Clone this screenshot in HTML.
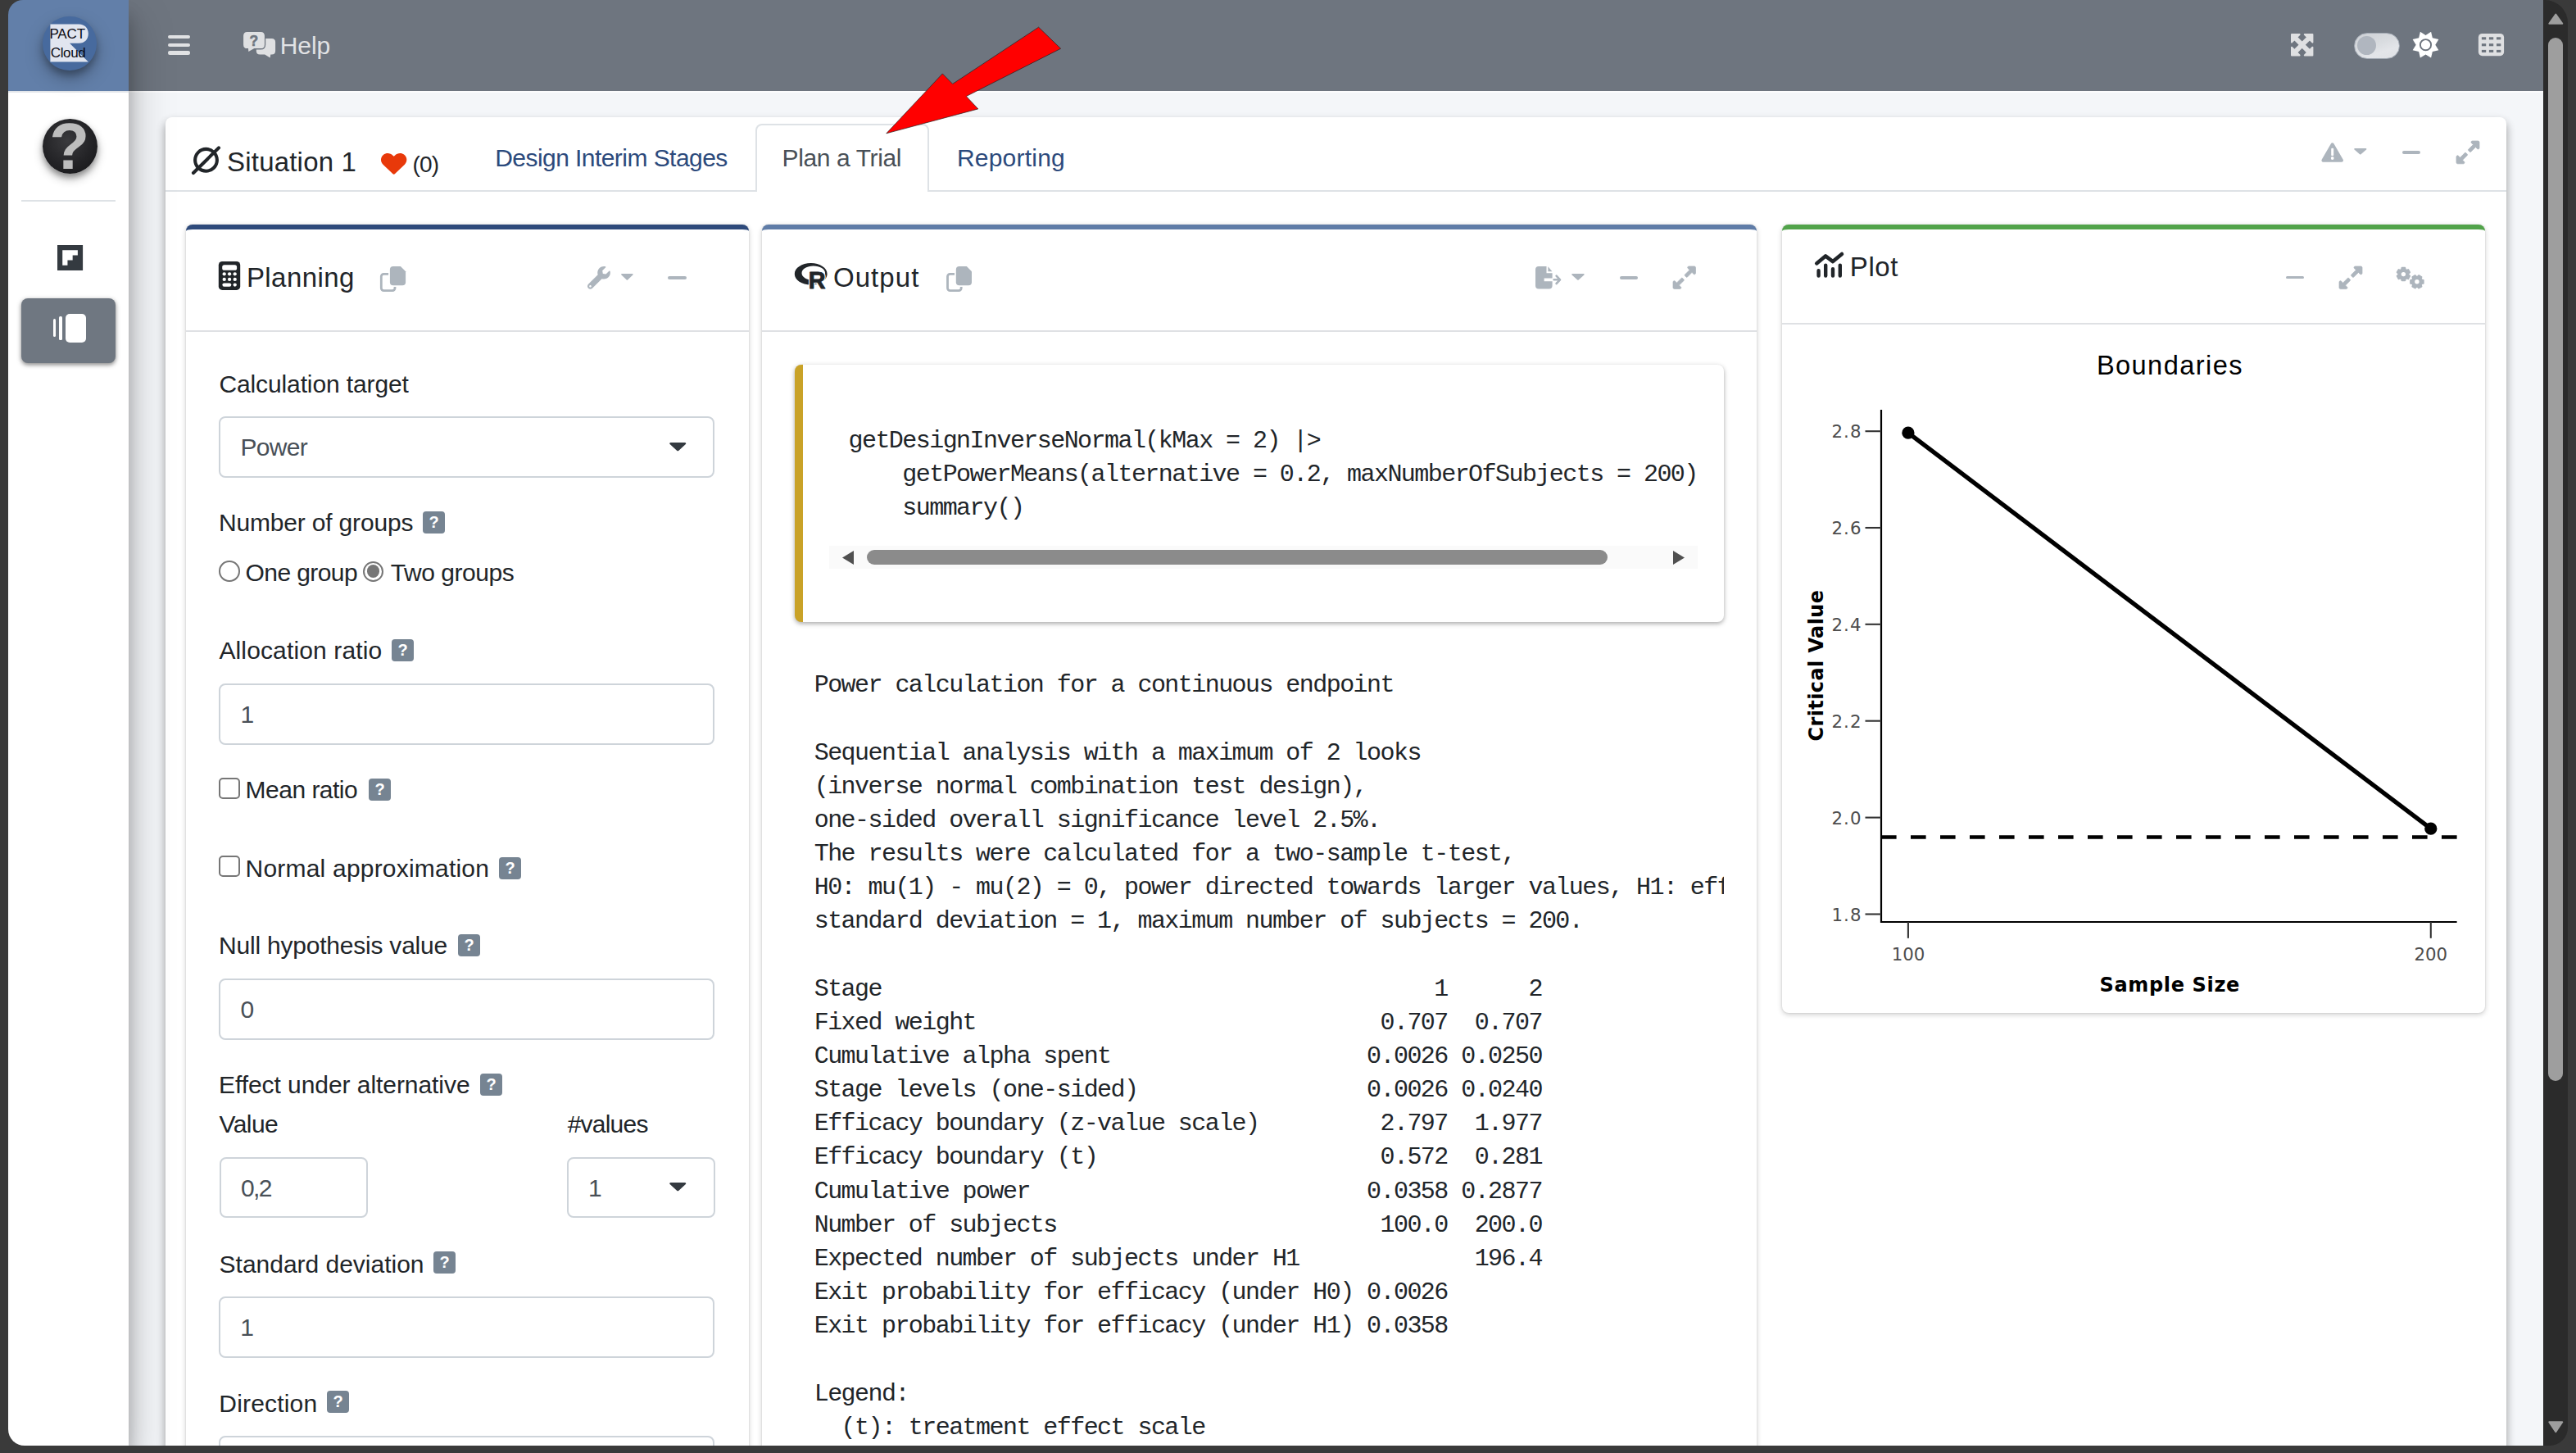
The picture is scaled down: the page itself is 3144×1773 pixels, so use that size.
<!DOCTYPE html>
<html lang="en"><head><meta charset="utf-8"><title>PACT Cloud</title><style>
*{box-sizing:border-box}
html,body{margin:0;padding:0}
body{width:3144px;height:1773px;background:#3a3a3a;overflow:hidden;position:relative;font-family:'Liberation Sans',sans-serif}
.t{position:absolute;white-space:pre;line-height:1}
.a{position:absolute}
svg{position:absolute;overflow:visible}
.card{position:absolute;background:#fff;border-radius:8px;box-shadow:0 0 2px rgba(0,0,0,.125),0 2px 6px rgba(0,0,0,.2)}
.inp{position:absolute;background:#fff;border:2px solid #ced4da;border-radius:8px;height:74.6px}
.hb{position:absolute;width:27px;height:27px;border-radius:4px;background:#768492;color:#fff;font-weight:700;font-size:20px;line-height:27px;text-align:center}
.hl{position:absolute;height:2px;background:#dfe1e4}
pre{margin:0;position:absolute;font-family:'Liberation Mono',monospace;font-size:30px;letter-spacing:-1.555px;line-height:41.15px;color:#212529;white-space:pre;overflow:hidden}
</style></head><body>
<div class="a" style="left:157px;top:0px;width:2947.00px;height:1764.00px;background:#f4f6f9"></div>
<div class="card" style="left:202px;top:143px;width:2857.00px;height:1657.00px;box-shadow:0 6px 12px rgba(0,0,0,.16),0 6px 12px rgba(0,0,0,.23)"></div>
<div class="a" style="left:202px;top:231.5px;width:2857.00px;height:2.00px;background:#dee2e6"></div>
<div class="a" style="left:921.6px;top:151px;width:212.40px;height:83.00px;background:#fff;border:2px solid #dee2e6;border-bottom:none;border-radius:8px 8px 0 0"></div>
<svg style="left:0px;top:0px;" width="3144.00" height="1773.00" viewBox="0 0 3144 1773" preserveAspectRatio="none"><circle cx="251.5" cy="195.3" r="13.4" fill="none" stroke="#212529" stroke-width="4.1"/><path d="M236 211L267 180.400" stroke="#212529" stroke-width="4.1" stroke-linecap="round"/></svg>
<span class="t" style="left:277.10px;top:180.97px;font-size:33px;color:#212529;letter-spacing:0.191px;">Situation 1</span>
<svg style="left:465px;top:186.8px;" width="31.40" height="26.80" viewBox="0 0 512 470" preserveAspectRatio="none"><path transform="translate(0,-30)" fill="#e8390a" d="M462.3 62.6C407.5 15.9 326 24.3 275.7 76.2L256 96.5l-19.7-20.3C186.1 24.3 104.5 15.9 49.7 62.6c-62.8 53.6-66.1 149.8-9.9 207.9l193.5 199.8c12.5 12.9 32.8 12.9 45.3 0l193.5-199.8c56.3-58.1 53-154.3-9.8-207.9z"/></svg>
<span class="t" style="left:503.40px;top:187.20px;font-size:28px;color:#212529;letter-spacing:-0.748px;">(0)</span>
<span class="t" style="left:604.20px;top:177.60px;font-size:30px;color:#2c4a7c;letter-spacing:-0.552px;">Design Interim Stages</span>
<span class="t" style="left:954.50px;top:177.60px;font-size:30px;color:#495057;letter-spacing:-0.368px;">Plan a Trial</span>
<span class="t" style="left:1167.90px;top:177.60px;font-size:30px;color:#2c4a7c;letter-spacing:0.226px;">Reporting</span>
<svg style="left:0px;top:0px;" width="3144.00" height="1773.00" viewBox="0 0 3144 1773" preserveAspectRatio="none"><path fill="#adb5bd" stroke="#adb5bd" stroke-width="4" stroke-linejoin="round" d="M2846.7 176.300L2835.4 195.7H2858Z"/><rect x="2845.2" y="180.8" width="3" height="9.3" rx="1.2" fill="#fff"/><circle cx="2846.7" cy="193" r="1.9" fill="#fff"/></svg>
<svg style="left:2872.8px;top:181px;" width="15.60" height="7.60" viewBox="8 192 304 169" preserveAspectRatio="none"><path fill="#adb5bd" d="M31.3 192h257.3c17.8 0 26.7 21.5 14.1 34.1L174.1 354.8c-7.8 7.8-20.5 7.8-28.3 0L17.2 226.1C4.6 213.5 13.5 192 31.3 192z"/></svg>
<div class="a" style="left:2932px;top:183.79999999999998px;width:22.20px;height:3.80px;background:#adb5bd;border-radius:2px"></div>
<svg style="left:2997.7px;top:171.7px;" width="28.00" height="27.80" viewBox="0 32 448 448" preserveAspectRatio="none"><path fill="#adb5bd" stroke="#adb5bd" stroke-width="12" stroke-linejoin="miter" d="M212.686 315.314L120 408l32.922 31.029c15.12 15.12 4.412 40.971-16.97 40.971h-112C10.697 480 0 469.255 0 456V344c0-21.382 25.803-32.09 40.922-16.971L72 360l92.686-92.686c6.248-6.248 16.379-6.248 22.627 0l25.373 25.373c6.249 6.248 6.249 16.378 0 22.627zm22.628-118.628L328 104l-32.922-31.029C279.958 57.851 290.666 32 312.048 32h112C437.303 32 448 42.745 448 56v112c0 21.382-25.803 32.09-40.922 16.971L376 152l-92.686 92.686c-6.248 6.248-16.379 6.248-22.627 0l-25.373-25.373c-6.249-6.248-6.249-16.378 0-22.627z"/></svg>
<div class="card" style="left:227px;top:274px;width:686.50px;height:1526.00px;border-top:6px solid #2e4a7b"></div>
<div class="hl" style="left:227px;top:402.8px;width:686.50px;height:2.00px;"></div>
<span class="t" style="left:300.90px;top:321.87px;font-size:33px;color:#212529;letter-spacing:0.431px;">Planning</span>
<svg style="left:757.8px;top:334px;" width="14.80" height="7.70" viewBox="8 192 304 169" preserveAspectRatio="none"><path fill="#adb5bd" d="M31.3 192h257.3c17.8 0 26.7 21.5 14.1 34.1L174.1 354.8c-7.8 7.8-20.5 7.8-28.3 0L17.2 226.1C4.6 213.5 13.5 192 31.3 192z"/></svg>
<div class="a" style="left:815.2px;top:337.0px;width:23.30px;height:3.80px;background:#adb5bd;border-radius:2px"></div>
<div class="card" style="left:930px;top:274px;width:1214.30px;height:1526.00px;border-top:6px solid #5f7ca7"></div>
<div class="hl" style="left:930px;top:402.8px;width:1214.30px;height:2.00px;"></div>
<span class="t" style="left:1016.90px;top:321.87px;font-size:33px;color:#212529;letter-spacing:1.081px;">Output</span>
<svg style="left:1918px;top:334px;" width="15.90" height="7.80" viewBox="8 192 304 169" preserveAspectRatio="none"><path fill="#adb5bd" d="M31.3 192h257.3c17.8 0 26.7 21.5 14.1 34.1L174.1 354.8c-7.8 7.8-20.5 7.8-28.3 0L17.2 226.1C4.6 213.5 13.5 192 31.3 192z"/></svg>
<div class="a" style="left:1977px;top:336.90000000000003px;width:22.20px;height:3.80px;background:#adb5bd;border-radius:2px"></div>
<svg style="left:2041.9px;top:324.9px;" width="27.50" height="27.50" viewBox="0 32 448 448" preserveAspectRatio="none"><path fill="#adb5bd" stroke="#adb5bd" stroke-width="12" stroke-linejoin="miter" d="M212.686 315.314L120 408l32.922 31.029c15.12 15.12 4.412 40.971-16.97 40.971h-112C10.697 480 0 469.255 0 456V344c0-21.382 25.803-32.09 40.922-16.971L72 360l92.686-92.686c6.248-6.248 16.379-6.248 22.627 0l25.373 25.373c6.249 6.248 6.249 16.378 0 22.627zm22.628-118.628L328 104l-32.922-31.029C279.958 57.851 290.666 32 312.048 32h112C437.303 32 448 42.745 448 56v112c0 21.382-25.803 32.09-40.922 16.971L376 152l-92.686 92.686c-6.248 6.248-16.379 6.248-22.627 0l-25.373-25.373c-6.249-6.248-6.249-16.378 0-22.627z"/></svg>
<div class="card" style="left:2174.7px;top:274px;width:858.80px;height:961.50px;border-top:6px solid #51a34a"></div>
<div class="hl" style="left:2174.7px;top:393.6px;width:858.80px;height:2.00px;"></div>
<span class="t" style="left:2257.80px;top:308.77px;font-size:33px;color:#212529;letter-spacing:0.602px;">Plot</span>
<div class="a" style="left:2790px;top:336.70000000000005px;width:22.00px;height:3.80px;background:#adb5bd;border-radius:2px"></div>
<svg style="left:2854.6px;top:325px;" width="28.00" height="27.60" viewBox="0 32 448 448" preserveAspectRatio="none"><path fill="#adb5bd" stroke="#adb5bd" stroke-width="12" stroke-linejoin="miter" d="M212.686 315.314L120 408l32.922 31.029c15.12 15.12 4.412 40.971-16.97 40.971h-112C10.697 480 0 469.255 0 456V344c0-21.382 25.803-32.09 40.922-16.971L72 360l92.686-92.686c6.248-6.248 16.379-6.248 22.627 0l25.373 25.373c6.249 6.248 6.249 16.378 0 22.627zm22.628-118.628L328 104l-32.922-31.029C279.958 57.851 290.666 32 312.048 32h112C437.303 32 448 42.745 448 56v112c0 21.382-25.803 32.09-40.922 16.971L376 152l-92.686 92.686c-6.248 6.248-16.379 6.248-22.627 0l-25.373-25.373c-6.249-6.248-6.249-16.378 0-22.627z"/></svg>
<span class="t" style="left:267.40px;top:453.61px;font-size:30px;color:#212529;letter-spacing:-0.114px;">Calculation target</span>
<div class="inp" style="left:267.2px;top:508.4px;width:605.3px"></div>
<span class="t" style="left:293.50px;top:531.30px;font-size:30px;color:#495057;letter-spacing:-0.686px;">Power</span>
<svg style="left:816.5px;top:539.9px;" width="20.50" height="10.30" viewBox="8 192 304 169" preserveAspectRatio="none"><path fill="#343a40" d="M31.3 192h257.3c17.8 0 26.7 21.5 14.1 34.1L174.1 354.8c-7.8 7.8-20.5 7.8-28.3 0L17.2 226.1C4.6 213.5 13.5 192 31.3 192z"/></svg>
<span class="t" style="left:267.10px;top:622.81px;font-size:30px;color:#212529;letter-spacing:-0.188px;">Number of groups</span>
<div class="hb" style="left:516.2px;top:624.2px">?</div>
<div class="a" style="left:267.2px;top:684.4px;width:25.50px;height:25.40px;border:2px solid #767676;border-radius:50%;background:#fff"></div>
<span class="t" style="left:299.60px;top:683.90px;font-size:30px;color:#212529;letter-spacing:-0.598px;">One group</span>
<div class="a" style="left:442.8px;top:684.6px;width:25.20px;height:25.20px;border:2px solid #767676;border-radius:50%;background:#fff"><div class="a" style="left:2.8px;top:2.8px;width:15.6px;height:15.6px;border-radius:50%;background:#767676"></div></div>
<span class="t" style="left:476.80px;top:683.90px;font-size:30px;color:#212529;letter-spacing:-0.454px;">Two groups</span>
<span class="t" style="left:267.40px;top:779.40px;font-size:30px;color:#212529;letter-spacing:0.141px;">Allocation ratio</span>
<div class="hb" style="left:478.2px;top:780.2px">?</div>
<div class="inp" style="left:267.2px;top:834.1px;width:605.3px"></div>
<span class="t" style="left:293.50px;top:857.00px;font-size:30px;color:#495057;">1</span>
<div class="a" style="left:267px;top:949.2px;width:25.70px;height:25.60px;border:2px solid #767676;border-radius:5px;background:#fff"></div>
<span class="t" style="left:299.60px;top:949.21px;font-size:30px;color:#212529;letter-spacing:-0.517px;">Mean ratio</span>
<div class="hb" style="left:450px;top:950.2px">?</div>
<div class="a" style="left:267px;top:1044.2px;width:25.70px;height:25.60px;border:2px solid #767676;border-radius:5px;background:#fff"></div>
<span class="t" style="left:299.60px;top:1044.70px;font-size:30px;color:#212529;letter-spacing:0.202px;">Normal approximation</span>
<div class="hb" style="left:609px;top:1045.6px">?</div>
<span class="t" style="left:267.10px;top:1139.40px;font-size:30px;color:#212529;letter-spacing:-0.220px;">Null hypothesis value</span>
<div class="hb" style="left:559px;top:1140.2px">?</div>
<div class="inp" style="left:267.2px;top:1194.1px;width:605.3px"></div>
<span class="t" style="left:293.60px;top:1217.00px;font-size:30px;color:#495057;">0</span>
<span class="t" style="left:267.00px;top:1308.61px;font-size:30px;color:#212529;letter-spacing:-0.060px;">Effect under alternative</span>
<div class="hb" style="left:586.2px;top:1310.2px">?</div>
<span class="t" style="left:267.50px;top:1356.90px;font-size:30px;color:#212529;letter-spacing:-0.579px;">Value</span>
<span class="t" style="left:692.70px;top:1356.90px;font-size:30px;color:#212529;letter-spacing:-0.784px;">#values</span>
<div class="inp" style="left:267.6px;top:1411.6px;width:181.0px"></div>
<span class="t" style="left:293.90px;top:1434.50px;font-size:30px;color:#495057;letter-spacing:-1.610px;">0,2</span>
<div class="inp" style="left:692px;top:1411.6px;width:181px"></div>
<span class="t" style="left:717.90px;top:1434.50px;font-size:30px;color:#495057;">1</span>
<svg style="left:817px;top:1443.1px;" width="20.50" height="10.30" viewBox="8 192 304 169" preserveAspectRatio="none"><path fill="#343a40" d="M31.3 192h257.3c17.8 0 26.7 21.5 14.1 34.1L174.1 354.8c-7.8 7.8-20.5 7.8-28.3 0L17.2 226.1C4.6 213.5 13.5 192 31.3 192z"/></svg>
<span class="t" style="left:267.60px;top:1527.51px;font-size:30px;color:#212529;letter-spacing:-0.017px;">Standard deviation</span>
<div class="hb" style="left:529.1px;top:1527.3px">?</div>
<div class="inp" style="left:267.2px;top:1582.2px;width:605.3px"></div>
<span class="t" style="left:293.30px;top:1605.11px;font-size:30px;color:#495057;">1</span>
<span class="t" style="left:267.30px;top:1697.61px;font-size:30px;color:#212529;letter-spacing:0.176px;">Direction</span>
<div class="hb" style="left:399.2px;top:1697.4px">?</div>
<div class="inp" style="left:267.2px;top:1752.3px;width:605.3px"></div>
<div class="a" style="left:970px;top:444.8px;width:1134.40px;height:314.00px;background:#fff;border-radius:8px;border-left:10px solid #c9a227;box-shadow:0 2px 6px rgba(0,0,0,.24),0 2px 4px rgba(0,0,0,.12)"></div>
<pre style="left:1035.5px;top:517.83px;width:1040px">getDesignInverseNormal(kMax = 2) |>
    getPowerMeans(alternative = 0.2, maxNumberOfSubjects = 200)
    summary()</pre>
<div class="a" style="left:1012.4px;top:665.8px;width:1059.60px;height:28.00px;background:#fafafa"></div>
<div class="a" style="left:1058.2px;top:671px;width:904.20px;height:18.00px;background:#8b8b8b;border-radius:9px"></div>
<svg style="left:1027.8px;top:671.5px;" width="14.00" height="17.00" viewBox="0 0 14 17" preserveAspectRatio="none"><path fill="#505050" d="M0 8.5L14 0V17Z"/></svg>
<svg style="left:2042px;top:671.5px;" width="14.00" height="17.00" viewBox="0 0 14 17" preserveAspectRatio="none"><path fill="#505050" d="M14 8.5L0 0V17Z"/></svg>
<pre style="left:993.7px;top:816.23px;width:1110.7px">Power calculation for a continuous endpoint

Sequential analysis with a maximum of 2 looks
(inverse normal combination test design),
one-sided overall significance level 2.5%.
The results were calculated for a two-sample t-test,
H0: mu(1) - mu(2) = 0, power directed towards larger values, H1: effect = 0.2,
standard deviation = 1, maximum number of subjects = 200.

Stage                                         1      2
Fixed weight                              0.707  0.707
Cumulative alpha spent                   0.0026 0.0250
Stage levels (one-sided)                 0.0026 0.0240
Efficacy boundary (z-value scale)         2.797  1.977
Efficacy boundary (t)                     0.572  0.281
Cumulative power                         0.0358 0.2877
Number of subjects                        100.0  200.0
Expected number of subjects under H1             196.4
Exit probability for efficacy (under H0) 0.0026
Exit probability for efficacy (under H1) 0.0358

Legend:
  (t): treatment effect scale</pre>
<svg style="left:0px;top:0px;" width="3144.00" height="1773.00" viewBox="0 0 3144 1773" preserveAspectRatio="none"><g fill="none" stroke="#000"><path d="M2296 500V1125H2998.6" stroke-width="2.2"/><path d="M2276.5 526.2H2296" stroke="#333" stroke-width="2.1"/><path d="M2276.5 644H2296" stroke="#333" stroke-width="2.1"/><path d="M2276.5 761.8H2296" stroke="#333" stroke-width="2.1"/><path d="M2276.5 879.7H2296" stroke="#333" stroke-width="2.1"/><path d="M2276.5 997.6H2296" stroke="#333" stroke-width="2.1"/><path d="M2276.5 1115.5H2296" stroke="#333" stroke-width="2.1"/><path d="M2328.9 1125V1144.8" stroke="#333" stroke-width="2.1"/><path d="M2966.8 1125V1144.8" stroke="#333" stroke-width="2.1"/><path d="M2296 1021.5H2998.6" stroke-width="4.5" stroke-dasharray="18.6 17.4" stroke-dashoffset="0"/><path d="M2328.9 528.2L2966.8 1011.2" stroke-width="5.4"/></g><circle cx="2328.9" cy="528.2" r="7.6"/><circle cx="2966.8" cy="1011.2" r="7.6"/></svg>
<span class="t" style="left:2235.50px;top:516.28px;font-size:21.3px;color:#4d4d4d;font-family:'DejaVu Sans',sans-serif;letter-spacing:1.065px;">2.8</span>
<span class="t" style="left:2235.50px;top:634.08px;font-size:21.3px;color:#4d4d4d;font-family:'DejaVu Sans',sans-serif;letter-spacing:1.065px;">2.6</span>
<span class="t" style="left:2235.50px;top:751.88px;font-size:21.3px;color:#4d4d4d;font-family:'DejaVu Sans',sans-serif;letter-spacing:1.065px;">2.4</span>
<span class="t" style="left:2235.50px;top:869.78px;font-size:21.3px;color:#4d4d4d;font-family:'DejaVu Sans',sans-serif;letter-spacing:1.065px;">2.2</span>
<span class="t" style="left:2235.50px;top:987.68px;font-size:21.3px;color:#4d4d4d;font-family:'DejaVu Sans',sans-serif;letter-spacing:1.065px;">2.0</span>
<span class="t" style="left:2235.50px;top:1105.58px;font-size:21.3px;color:#4d4d4d;font-family:'DejaVu Sans',sans-serif;letter-spacing:1.065px;">1.8</span>
<span class="t" style="left:2308.68px;top:1153.98px;font-size:21.3px;color:#4d4d4d;font-family:'DejaVu Sans',sans-serif;">100</span>
<span class="t" style="left:2946.48px;top:1153.98px;font-size:21.3px;color:#4d4d4d;font-family:'DejaVu Sans',sans-serif;">200</span>
<span class="t" style="left:2562.60px;top:1189.70px;font-size:24px;color:#000;font-family:'DejaVu Sans',sans-serif;font-weight:700;letter-spacing:0.639px;">Sample Size</span>
<span class="t" style="left:2558.90px;top:430.30px;font-size:32.6px;color:#000;letter-spacing:1.419px;">Boundaries</span>
<span class="t" id="ylab" style="left:2216.5px;top:811.6px;font-family:'DejaVu Sans',sans-serif;font-weight:700;font-size:24px;color:#000;transform:translate(-50%,-50%) rotate(-90deg);letter-spacing:0.4px">Critical Value</span>
<div class="a" style="left:157px;top:0px;width:2947.00px;height:111.00px;background:#6e757f"></div>
<div class="a" style="left:157px;top:111px;width:2947.00px;height:2.40px;background:#fcfcfd"></div>
<div class="a" style="left:205px;top:42.7px;width:27.30px;height:4.40px;background:#e1e2e4;border-radius:2.2px"></div>
<div class="a" style="left:205px;top:52.5px;width:27.30px;height:4.40px;background:#e1e2e4;border-radius:2.2px"></div>
<div class="a" style="left:205px;top:62.3px;width:27.30px;height:4.40px;background:#e1e2e4;border-radius:2.2px"></div>
<span class="t" style="left:341.80px;top:40.51px;font-size:30px;color:#e1e2e4;letter-spacing:-0.105px;">Help</span>
<svg style="left:0px;top:0px;" width="3144.00" height="1773.00" viewBox="0 0 3144 1773" preserveAspectRatio="none"><rect x="266.8" y="319" width="26.4" height="34.9" rx="4.4" fill="#212529"/><rect x="271.2" y="323.2" width="17.9" height="6.6" rx="2.6" fill="#fff"/><circle cx="273.7" cy="334.3" r="2.15" fill="#fff"/><circle cx="280.1" cy="334.3" r="2.15" fill="#fff"/><circle cx="286.7" cy="334.3" r="2.15" fill="#fff"/><circle cx="273.7" cy="340.9" r="2.15" fill="#fff"/><circle cx="280.1" cy="340.9" r="2.15" fill="#fff"/><circle cx="286.7" cy="340.9" r="2.15" fill="#fff"/><rect x="271.4" y="345.4" width="10.9" height="4.4" rx="2.2" fill="#fff"/><circle cx="286.7" cy="347.6" r="2.15" fill="#fff"/></svg>
<svg style="left:0px;top:0px;" width="3144.00" height="1773.00" viewBox="0 0 3144 1773" preserveAspectRatio="none"><rect x="465.29999999999995" y="334.29999999999995" width="16.7" height="20.300000000000022" rx="3" fill="none" stroke="#adb5bd" stroke-width="2.8"/><path d="M479.9 325H488.9L495.09999999999997 331.2V344.2Q495.09999999999997 348.2 491.09999999999997 348.2H479.9Q475.9 348.2 475.9 344.2V329Q475.9 325 479.9 325Z" fill="#adb5bd" stroke="#fff" stroke-width="3.6" paint-order="stroke"/></svg>
<svg style="left:716.8px;top:325px;" width="27.90" height="27.70" viewBox="0 0 512 512" preserveAspectRatio="none"><path fill="#adb5bd" d="M507.73 109.1c-2.24-9.03-13.54-12.09-20.12-5.51l-74.36 74.36-67.88-11.31-11.31-67.88 74.36-74.36c6.62-6.62 3.43-17.9-5.66-20.16-47.38-11.74-99.55.91-136.58 37.93-39.64 39.64-50.55 97.1-34.05 147.2L18.74 402.76c-24.99 24.99-24.99 65.51 0 90.5 24.99 24.99 65.51 24.99 90.5 0l213.21-213.21c50.12 16.71 107.47 5.68 147.37-34.22 37.07-37.07 49.7-89.32 37.91-136.73zM64 472c-13.25 0-24-10.75-24-24 0-13.26 10.75-24 24-24s24 10.74 24 24c0 13.25-10.75 24-24 24z"/></svg>
<svg style="left:0px;top:0px;" width="3144.00" height="1773.00" viewBox="0 0 3144 1773" preserveAspectRatio="none"><path fill="#212529" fill-rule="evenodd" d="M989.7 321c11 0 19.9 5.95 19.9 13.3s-8.9 13.3-19.9 13.3s-19.9-5.95-19.9-13.3s8.9-13.3 19.9-13.3zM992.8 324.6c-7.9 0-14.3 3.9-14.3 8.7s6.4 8.7 14.3 8.7s14.3-3.9 14.3-8.7s-6.400-8.7-14.3-8.7z"/><text x="986.8" y="351.7" font-family="Liberation Sans,sans-serif" font-weight="700" font-size="28.8" fill="#212529" stroke="#fff" stroke-width="3.2" stroke-linejoin="round">R</text><text x="986.8" y="351.7" font-family="Liberation Sans,sans-serif" font-weight="700" font-size="28.8" fill="#212529" stroke="#212529" stroke-width="0.9" stroke-linejoin="round">R</text></svg>
<svg style="left:0px;top:0px;" width="3144.00" height="1773.00" viewBox="0 0 3144 1773" preserveAspectRatio="none"><rect x="1156.5" y="334.29999999999995" width="16.7" height="20.300000000000022" rx="3" fill="none" stroke="#adb5bd" stroke-width="2.8"/><path d="M1170.8 325H1179.8L1186.0 331.2V344.2Q1186.0 348.2 1182.0 348.2H1170.8Q1166.8 348.2 1166.8 344.2V329Q1166.8 325 1170.8 325Z" fill="#adb5bd" stroke="#fff" stroke-width="3.6" paint-order="stroke"/></svg>
<svg style="left:0px;top:0px;" width="3144.00" height="1773.00" viewBox="0 0 3144 1773" preserveAspectRatio="none"><path fill="#adb5bd" d="M1878 325H1887.5V333.2H1894.6V339.4H1884.6V343.2H1894.6V348.4Q1894.6 352.4 1890.6 352.4H1878Q1874 352.4 1874 348.4V329Q1874 325 1878 325Z"/><path fill="#adb5bd" d="M1889.4 325.2L1894.4 331.2H1889.4Z"/><path fill="none" stroke="#adb5bd" stroke-width="2.6" stroke-linecap="round" stroke-linejoin="round" d="M1896.6 341.3H1903.2M1899.6 336.6L1904 341.3L1899.6 346"/></svg>
<svg style="left:0px;top:0px;" width="3144.00" height="1773.00" viewBox="0 0 3144 1773" preserveAspectRatio="none"><path fill="none" stroke="#212529" stroke-width="4.5" stroke-linecap="round" stroke-linejoin="round" d="M2217.2 321.4L2228 312.4L2237 319.1L2248 309.9"/><path fill="none" stroke="#212529" stroke-width="4.4" stroke-linecap="round" d="M2219.6 330.3V336.6M2228.2 323.6V336.6M2237 328.2V336.6M2245.8 323.6V336.6"/></svg>
<svg style="left:0px;top:0px;" width="3144.00" height="1773.00" viewBox="0 0 3144 1773" preserveAspectRatio="none"><path fill="#adb5bd" stroke="#adb5bd" stroke-width="2" stroke-linejoin="round" fill-rule="evenodd" d="M2931.13 328.83L2931.50 326.83L2935.30 326.83L2935.67 328.83L2937.26 329.75L2939.18 329.07L2941.08 332.36L2939.53 333.68L2939.53 335.52L2941.08 336.84L2939.18 340.13L2937.26 339.45L2935.67 340.37L2935.30 342.37L2931.50 342.37L2931.13 340.37L2929.54 339.45L2927.62 340.13L2925.72 336.84L2927.27 335.52L2927.27 333.68L2925.72 332.36L2927.62 329.07L2929.54 329.75ZM2930.70 334.60a2.7 2.7 0 1 0 5.4 0a2.7 2.7 0 1 0 -5.4 0Z"/><circle cx="2933.4" cy="334.6" r="2.7" fill="#fff"/><path fill="#adb5bd" stroke="#adb5bd" stroke-width="2" stroke-linejoin="round" fill-rule="evenodd" d="M2950.82 337.67L2952.14 336.12L2955.43 338.02L2954.75 339.94L2955.67 341.53L2957.67 341.90L2957.67 345.70L2955.67 346.07L2954.75 347.66L2955.43 349.58L2952.14 351.48L2950.82 349.93L2948.98 349.93L2947.66 351.48L2944.37 349.58L2945.05 347.66L2944.13 346.07L2942.13 345.70L2942.13 341.90L2944.13 341.53L2945.05 339.94L2944.37 338.02L2947.66 336.12L2948.98 337.67ZM2947.20 343.80a2.7 2.7 0 1 0 5.4 0a2.7 2.7 0 1 0 -5.4 0Z"/><circle cx="2949.9" cy="343.8" r="2.7" fill="#fff"/></svg>
<svg style="left:0px;top:0px;" width="3144.00" height="1773.00" viewBox="0 0 3144 1773" preserveAspectRatio="none"><path fill="#dfe0e2" d="M317.3 47H331.6Q336.1 47 336.1 51.5V62.1Q336.1 66.6 331.6 66.6H330.3L329.6 70.4L323.2 66.6H317.3Q312.8 66.6 312.8 62.1V51.5Q312.8 47 317.3 47Z"/><path fill="#dfe0e2" stroke="#6e757f" stroke-width="2.6" paint-order="stroke" d="M301.8 38.9H318.2Q322.9 38.9 322.9 43.6V54.4Q322.9 59.1 318.2 59.1H310.3L303.3 62.9L303 59.1H301.8Q297.1 59.1 297.1 54.4V43.6Q297.1 38.9 301.8 38.9Z"/><text x="309.9" y="56" text-anchor="middle" font-family="Liberation Sans,sans-serif" font-weight="700" font-size="17.5" fill="#6e757f" stroke="#6e757f" stroke-width="0.5">?</text></svg>
<svg style="left:0px;top:0px;" width="3144.00" height="1773.00" viewBox="0 0 3144 1773" preserveAspectRatio="none"><path fill="#dfe0e2" stroke="#dfe0e2" stroke-width="2" stroke-linejoin="round" d="M2797 42L2806.6 42L2797 51.6Z"/><path fill="#dfe0e2" stroke="#dfe0e2" stroke-width="2" stroke-linejoin="round" d="M2822.4 42L2812.8 42L2822.4 51.6Z"/><path fill="#dfe0e2" stroke="#dfe0e2" stroke-width="2" stroke-linejoin="round" d="M2797 67.4L2806.6 67.4L2797 57.800000000000004Z"/><path fill="#dfe0e2" stroke="#dfe0e2" stroke-width="2" stroke-linejoin="round" d="M2822.4 67.4L2812.8 67.4L2822.4 57.800000000000004Z"/><path stroke="#dfe0e2" stroke-width="6" fill="none" d="M2801.5 46.5L2817.9 62.9M2817.9 46.500L2801.5 62.9"/></svg>
<div class="a" style="left:2872.9px;top:39.8px;width:56.00px;height:32.00px;border-radius:16px;border:1.8px solid #a3aab4;background:linear-gradient(160deg,#cdd0d5 0%,#d9dce0 45%,#e3e5e9 70%,#dfe1e5 100%)"></div>
<div class="a" style="left:2877.3px;top:44.15px;width:23.20px;height:23.20px;border-radius:50%;background:#b0b6bf"></div>
<svg style="left:0px;top:0px;" width="3144.00" height="1773.00" viewBox="0 0 3144 1773" preserveAspectRatio="none"><path fill="#fff" d="M2967.08 38.81L2968.84 46.36L2976.39 48.12L2972.30 54.70L2976.39 61.28L2968.84 63.04L2967.08 70.59L2960.50 66.50L2953.92 70.59L2952.16 63.04L2944.61 61.28L2948.70 54.70L2944.61 48.12L2952.16 46.36L2953.92 38.81L2960.50 42.90Z"/><circle cx="2960.5" cy="54.7" r="6.6" fill="#fff" stroke="#6e757f" stroke-width="1.9"/></svg>
<svg style="left:0px;top:0px;" width="3144.00" height="1773.00" viewBox="0 0 3144 1773" preserveAspectRatio="none"><rect x="3024.9" y="41" width="31.2" height="27.2" rx="4.6" fill="#dfe0e2"/><rect x="3028.9" y="45.3" width="5.3" height="3.1" fill="#6e757f"/><rect x="3037.9" y="45.3" width="5.3" height="3.1" fill="#6e757f"/><rect x="3047" y="45.3" width="5.3" height="3.1" fill="#6e757f"/><rect x="3028.9" y="53.2" width="5.3" height="3.1" fill="#6e757f"/><rect x="3037.9" y="53.2" width="5.3" height="3.1" fill="#6e757f"/><rect x="3047" y="53.2" width="5.3" height="3.1" fill="#6e757f"/><rect x="3028.9" y="60.9" width="5.3" height="3.1" fill="#6e757f"/><rect x="3037.9" y="60.9" width="5.3" height="3.1" fill="#6e757f"/><rect x="3047" y="60.9" width="5.3" height="3.1" fill="#6e757f"/></svg>
<svg style="left:0px;top:0px;z-index:40" width="3144.00" height="1773.00" viewBox="0 0 3144 1773" preserveAspectRatio="none"><path fill="#ff0000" stroke="#222" stroke-width="0.7" stroke-linejoin="miter" d="M1081.8 162.8L1150.3 89.9L1162.7 102.4L1267.6 33.2L1294.6 59.3L1179.3 117.5L1193.8 132.9Z"/></svg>
<div class="a" style="left:10px;top:0px;width:147.00px;height:1764.00px;background:#fff;box-shadow:0 28px 56px rgba(0,0,0,.25),0 20px 20px rgba(0,0,0,.22)"></div>
<div class="a" style="left:10px;top:0px;width:147.00px;height:111.00px;background:#627fa9"></div>
<div class="a" style="left:10px;top:111px;width:147.00px;height:2.00px;background:#e3e6ea"></div>
<div class="a" style="left:52.4px;top:20.2px;width:65.40px;height:65.40px;border-radius:50%;background:#476a9e;box-shadow:0 10px 22px rgba(0,0,0,.26),0 6px 8px rgba(0,0,0,.26)"></div>
<svg style="left:52.4px;top:20.2px;" width="65.40" height="65.40" viewBox="52.4 20.2 65.4 65.4" preserveAspectRatio="none"><path fill="#e1e5ef" d="M61.8 29.6H96.5C104 29.6 108.2 34.6 108.2 41.2C108.2 48 104 53 96.5 53H85.4L108.2 75.8H61.8Z"/></svg>
<span class="t" style="left:60.40px;top:32.71px;font-size:17px;color:#0a0a12;letter-spacing:-0.098px;">PACT</span>
<span class="t" style="left:61.80px;top:56.11px;font-size:17px;color:#0a0a12;letter-spacing:-0.391px;">Cloud</span>
<div class="a" style="left:51.7px;top:144.8px;width:67.10px;height:67.10px;border-radius:50%;background:radial-gradient(circle at 45% 40%,#3a3a3d 0%,#232326 55%,#141416 100%);box-shadow:0 6px 12px rgba(0,0,0,.3),0 4px 6px rgba(0,0,0,.25)"></div>
<span class="t" style="left:60.37px;top:139.28px;font-size:80px;color:#bdbdbd;font-weight:700;">?</span>
<div class="a" style="left:26px;top:243.7px;width:115.00px;height:2.00px;background:#dee2e6"></div>
<svg style="left:70px;top:299.1px;" width="31.10" height="31.00" viewBox="0 0 31 31" preserveAspectRatio="none"><path fill="#343a40" d="M0 0H31V31H0Z"/><path fill="#fff" d="M6.2 6.2H24.8V12.4H18.6V18.6H12.4V24.8H6.2Z"/></svg>
<div class="a" style="left:26px;top:364.1px;width:115.00px;height:78.50px;background:#6f7781;border-radius:8px;box-shadow:0 2px 6px rgba(0,0,0,.3),0 2px 4px rgba(0,0,0,.24)"></div>
<div class="a" style="left:79.7px;top:382.6px;width:25.80px;height:35.70px;background:#fff;border-radius:5px"></div>
<div class="a" style="left:72px;top:385.5px;width:3.60px;height:29.20px;background:#fff;border-radius:1.5px"></div>
<div class="a" style="left:65.4px;top:389px;width:3.10px;height:22.30px;background:#fff;border-radius:1.5px"></div>
<div class="a" style="left:3104px;top:0px;width:30.00px;height:1764.00px;background:#2b2b2b"></div>
<div class="a" style="left:3110px;top:46px;width:18.00px;height:1273.00px;background:#9e9e9e;border-radius:9px"></div>
<svg style="left:3109.6px;top:16px;" width="18.60" height="14.00" viewBox="0 0 18.6 14" preserveAspectRatio="none"><path fill="#9e9e9e" stroke="#9e9e9e" stroke-width="2" stroke-linejoin="round" d="M9.3 1.5L17.3 12.8H1.3Z"/></svg>
<svg style="left:3109.6px;top:1733.6px;" width="18.60" height="14.60" viewBox="0 0 18.6 14.6" preserveAspectRatio="none"><path fill="#9e9e9e" stroke="#9e9e9e" stroke-width="2" stroke-linejoin="round" d="M9.3 13.2L17.3 1.3H1.3Z"/></svg>
<div class="a" style="left:10px;top:0px;width:3123.70px;height:1763.50px;border-radius:18px 28px 22px 20px;box-shadow:0 0 0 80px #3a3a3a;z-index:50"></div>
</body></html>
